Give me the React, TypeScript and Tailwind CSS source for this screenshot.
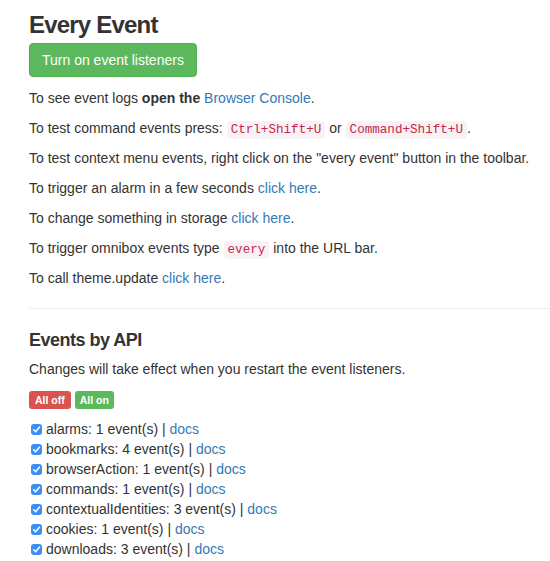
import React from "react";

const apis = [
  { name: "alarms", count: 1 },
  { name: "bookmarks", count: 4 },
  { name: "browserAction", count: 1 },
  { name: "commands", count: 1 },
  { name: "contextualIdentities", count: 3 },
  { name: "cookies", count: 1 },
  { name: "downloads", count: 3 },
];

const Code = ({ children }: { children: React.ReactNode }) => (
  <code className="font-['Liberation_Mono','DejaVu_Sans_Mono',monospace] text-[12.6px] leading-[12px] text-[#c7254e] bg-[#f9f2f4] rounded-[4px] px-[4px] py-[2px]">
    {children}
  </code>
);

const Link = ({ children }: { children: React.ReactNode }) => (
  <a href="#" className="text-[#337ab7]">
    {children}
  </a>
);

const Check = () => (
  <span className="w-[11px] h-[11px] rounded-[3px] bg-[#3b8cf5] flex items-center justify-center shrink-0">
    <svg width="9" height="9" viewBox="0 0 9 9">
      <path d="M1.6 4.8 L3.6 6.8 L7.4 2.2" fill="none" stroke="white" strokeWidth="1.6" strokeLinecap="round" strokeLinejoin="round" />
    </svg>
  </span>
);

export default function App() {
  return (
    <div className="min-h-screen bg-white pl-[29px] pt-[12px] font-['Liberation_Sans',Arial,sans-serif] text-[14px] text-[#333]">
      <h1 className="h-[26px] leading-[26px] text-[24px] font-bold tracking-[-0.8px]">Every Event</h1>

      <button
        type="button"
        className="mt-[5px] h-[34px] px-[12px] rounded-[4px] border border-[#4cae4c] bg-[#5cb85c] text-white text-[14px] leading-[20px]"
      >
        Turn on event listeners
      </button>

      <div className="mt-[11px] flex flex-col gap-[10px]">
        <p className="h-[20px] leading-[20px]">
          To see event logs <b>open the</b> <Link>Browser Console</Link>.
        </p>
        <p className="h-[20px] leading-[20px]">
          To test command events press: <Code>Ctrl+Shift+U</Code> or <Code>Command+Shift+U</Code>.
        </p>
        <p className="h-[20px] leading-[20px]">
          To test context menu events, right click on the "every event" button in the toolbar.
        </p>
        <p className="h-[20px] leading-[20px]">
          To trigger an alarm in a few seconds <Link>click here</Link>.
        </p>
        <p className="h-[20px] leading-[20px]">
          To change something in storage <Link>click here</Link>.
        </p>
        <p className="h-[20px] leading-[20px]">
          To trigger omnibox events type <Code>every</Code> into the URL bar.
        </p>
        <p className="h-[20px] leading-[20px]">
          To call theme.update <Link>click here</Link>.
        </p>
      </div>

      <hr className="mt-[20px] border-0 border-t border-[#eee]" />

      <h4 className="mt-[21px] h-[20px] leading-[20px] text-[18px] font-bold tracking-[-0.5px]">Events by API</h4>
      <p className="mt-[9px] h-[20px] leading-[20px]">Changes will take effect when you restart the event listeners.</p>

      <div className="mt-[12px] flex gap-[4px]">
        <span className="h-[18px] leading-[18px] px-[6px] rounded-[3px] bg-[#d9534f] text-white text-[10.5px] font-bold">All off</span>
        <span className="h-[18px] leading-[18px] px-[5px] rounded-[3px] bg-[#5cb85c] text-white text-[10.5px] font-bold">All on</span>
      </div>

      <div className="mt-[10px] flex flex-col">
        {apis.map((api) => (
          <div key={api.name} className="h-[20px] flex items-center pl-[2px] gap-[4px]">
            <Check />
            <span className="leading-[20px]">
              {api.name}: {api.count} event(s) | <Link>docs</Link>
            </span>
          </div>
        ))}
      </div>
    </div>
  );
}
